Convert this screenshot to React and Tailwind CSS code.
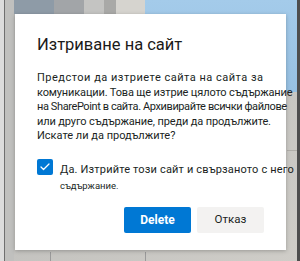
import { Check } from 'lucide-react';

function Backdrop() {
    // blurred page behind the dialog
    return (
        <svg className="absolute inset-0" width="300" height="261" viewBox="0 0 300 261" aria-hidden="true">
            <defs>
                <linearGradient id="sky" x1="0" y1="0" x2="0" y2="1">
                    <stop offset="0" stopColor="#a4cbea" />
                    <stop offset="1" stopColor="#97c1e3" />
                </linearGradient>
                <linearGradient id="floor" x1="0" y1="0" x2="1" y2="1">
                    <stop offset="0" stopColor="#b9b9b7" />
                    <stop offset="1" stopColor="#cfcdc8" />
                </linearGradient>
            </defs>
            <rect width="300" height="261" fill="url(#floor)" />
            <rect x="145" y="0" width="152" height="92" fill="url(#sky)" />
            <rect x="14" y="0" width="40" height="14" fill="#8e9ba7" />
            <rect x="54" y="0" width="30" height="14" fill="#a2a5a8" />
            <rect x="84" y="0" width="20" height="14" fill="#c4c4c2" />
            <rect x="104" y="0" width="12" height="14" fill="#a9a9a7" />
            <rect x="116" y="0" width="29" height="14" fill="#d6d4cf" />
            <rect x="5" y="0" width="9" height="261" fill="#c0c0be" />
            <rect x="0" y="0" width="4" height="261" fill="#dcdcdc" />
            <rect x="4" y="0" width="1" height="261" fill="#6f6f6f" />
            <rect x="50" y="252" width="1" height="9" fill="#9a9a9a" />
            <rect x="145" y="252" width="1" height="9" fill="#9a9a9a" />
            <rect x="287" y="150" width="10" height="1" fill="#b0aea9" />
            <rect x="297" y="0" width="3" height="261" fill="#4e4e4e" />
        </svg>
    );
}

export default function App() {
    return (
        <div
            className="relative w-[300px] h-[261px] overflow-hidden pl-[15px] pt-[14px]"
            style={{ fontFamily: 'Roboto, "Liberation Sans", Arial, sans-serif' }}
        >
            <Backdrop />

            <div className="relative w-[271px] h-[236px] bg-white shadow-[0_1px_4px_rgba(0,0,0,0.25)] pl-[22px] pt-[20px] text-[#201f1e]">
                <h2 className="text-[16.5px] leading-[22px] font-normal text-[#1b1a19]">Изтриване на сайт</h2>

                <div className="mt-[15px] text-[11px] leading-[14.5px] whitespace-nowrap">
                    <p className="tracking-[0.5px]">Предстои да изтриете сайта на сайта за</p>
                    <p className="tracking-[-0.15px]">комуникации. Това ще изтрие цялото съдържание</p>
                    <p className="tracking-[-0.4px]">на SharePoint в сайта. Архивирайте всички файлове</p>
                    <p className="tracking-[-0.12px]">или друго съдържание, преди да продължите.</p>
                    <p>Искате ли да продължите?</p>
                </div>

                <label className="mt-[15px] flex items-start gap-[7px]">
                    <span className="w-[16px] h-[16px] rounded-[2px] bg-[#0078d4] flex items-center justify-center shrink-0">
                        <Check size={12} strokeWidth={2.5} className="text-white" />
                    </span>
                    <span className="whitespace-nowrap">
                        <span className="block text-[11px] tracking-[0.17px] leading-[18px] mt-[2px]">Да. Изтрийте този сайт и свързаното с него</span>
                        <span className="block text-[9.5px] leading-[14px]">съдържание.</span>
                    </span>
                </label>

                <div className="mt-[14px] flex justify-end gap-[6px] pr-[22px]">
                    <button className="w-[67px] h-[26px] rounded-[2px] bg-[#0078d4] text-white text-[12px] font-bold">
                        Delete
                    </button>
                    <button className="w-[67px] h-[26px] rounded-[2px] bg-[#f3f2f1] text-[#201f1e] text-[11.5px]">
                        Отказ
                    </button>
                </div>
            </div>
        </div>
    );
}
